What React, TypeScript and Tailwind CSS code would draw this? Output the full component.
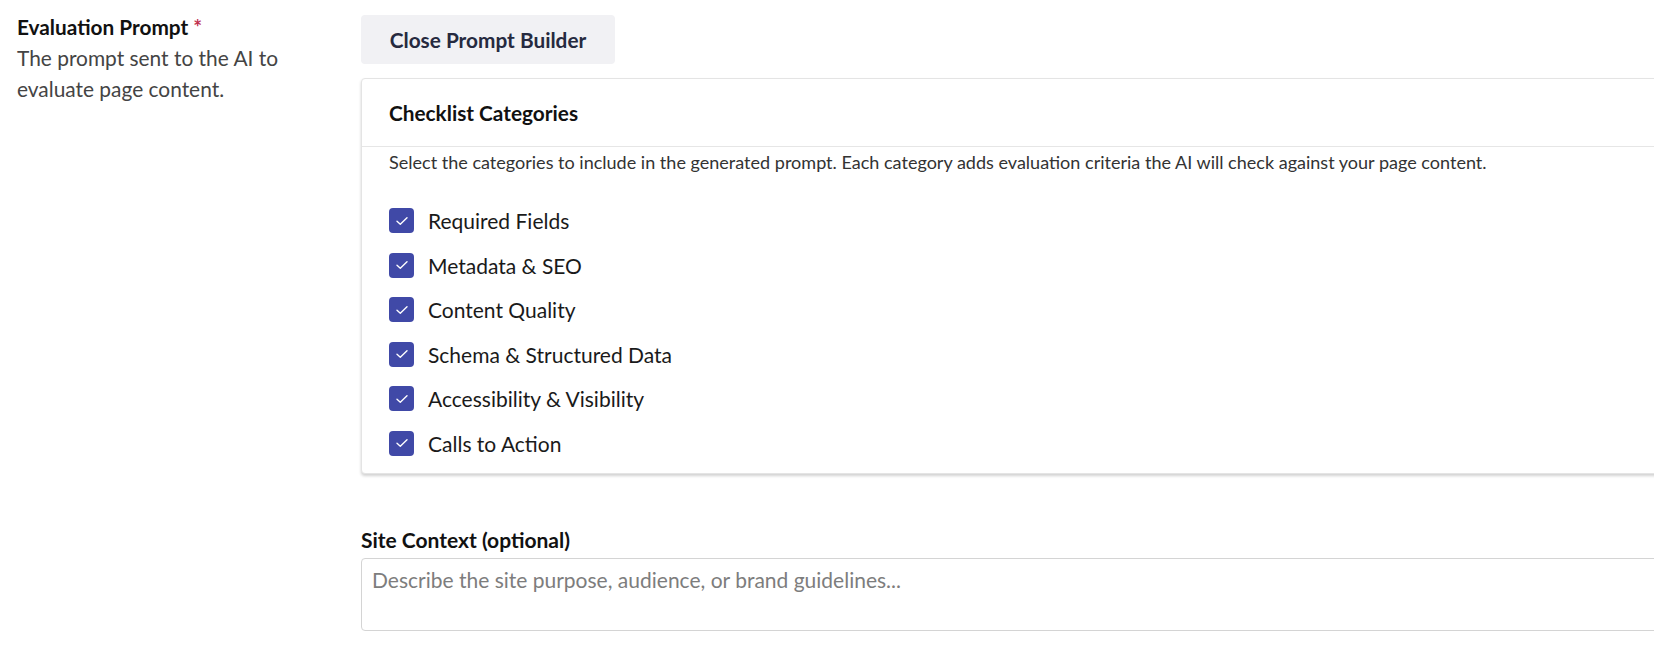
import React from "react";

const categories = [
  "Required Fields",
  "Metadata & SEO",
  "Content Quality",
  "Schema & Structured Data",
  "Accessibility & Visibility",
  "Calls to Action",
];

function CheckBox() {
  return (
    <span className="flex h-[25px] w-[25px] shrink-0 items-center justify-center rounded-[4px] bg-[#4049a7]">
      <svg width="16" height="16" viewBox="0 0 16 16" fill="none">
        <path d="M3 8.3 L6.3 11.2 L13 4.8" stroke="white" strokeWidth="1.4" strokeLinecap="round" strokeLinejoin="round" />
      </svg>
    </span>
  );
}

export default function App() {
  return (
    <div
      className="flex h-[657px] w-[1654px] overflow-hidden bg-white text-[#1a1a1a]"
      style={{ fontFamily: "Lato, 'Noto Sans', sans-serif" }}
    >
      {/* label column */}
      <div className="w-[361px] shrink-0 pl-[17px] pt-[13px]">
        <div className="text-[20.8px] font-bold leading-[28px] text-[#111]">
          Evaluation Prompt <span className="text-[#c0314f]">*</span>
        </div>
        <p className="mt-[1px] w-[290px] text-[20.9px] leading-[31px] text-[#444]">
          The prompt sent to the AI to evaluate page content.
        </p>
      </div>

      {/* builder column */}
      <div className="w-[1400px] shrink-0 pt-[15px]">
        <button className="flex h-[49px] w-[254px] items-center justify-center rounded-[4px] bg-[#f1f1f4] text-[20.8px] font-bold text-[#262a3f]">
          Close Prompt Builder
        </button>

        <div className="mt-[14px] rounded-[4px] border border-[#e4e4e4] bg-white shadow-[0_2px_3px_rgba(0,0,0,0.18)]">
          <div className="flex h-[68px] items-center border-b border-[#e6e6e6] px-[27px] text-[20.8px] font-bold text-[#111]">
            Checklist Categories
          </div>
          <div className="px-[27px] pb-[17px] pt-[3px]">
            <p className="text-[18.05px] leading-[24px] text-[#333]">
              Select the categories to include in the generated prompt. Each category adds evaluation criteria the AI will check against your page content.
            </p>
            <ul className="mt-[34px] flex flex-col gap-[19.6px]">
              {categories.map((c) => (
                <li key={c} className="flex h-[25px] items-center gap-[14px]">
                  <CheckBox />
                  <span className="text-[21px] leading-[25px] text-[#1a1a1a]">{c}</span>
                </li>
              ))}
            </ul>
          </div>
        </div>

        <div className="mt-[53px] text-[21px] font-bold leading-[26px] text-[#111]">
          Site Context (optional)
        </div>
        <textarea
          className="mt-[5px] block h-[73px] w-full resize-none rounded-[4px] border border-[#d4d4d4] px-[10px] pt-[8px] text-[21px] leading-[26px] text-[#333] outline-none placeholder:text-[#7d7d7d]"
          placeholder="Describe the site purpose, audience, or brand guidelines..."
        />
      </div>
    </div>
  );
}
